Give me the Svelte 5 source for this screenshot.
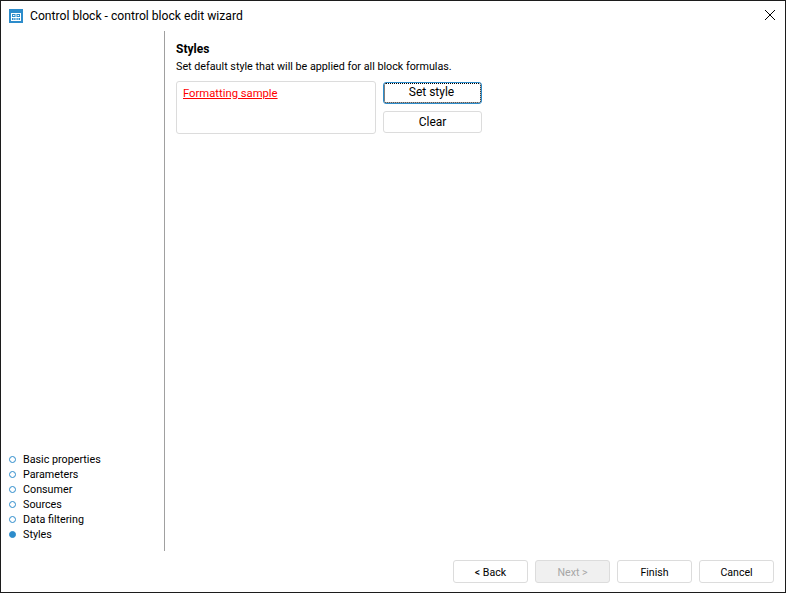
<script lang="ts">
  const steps = ['Basic properties', 'Parameters', 'Consumer', 'Sources', 'Data filtering', 'Styles'];
  let current = 'Styles';
</script>

<style>
  :global(body) {
    background: #fff;
  }

  .window {
    box-sizing: border-box;
    width: 786px;
    height: 593px;
    border: 1px solid #1c1c1c;
    background: #fff;
    display: flex;
    flex-direction: column;
    font-family: Roboto, "Open Sans", sans-serif;
    font-size: 10.75px;
    color: #000;
  }

  .titlebar {
    height: 30px;
    display: flex;
    align-items: center;
    padding: 0 9px 0 8px;
    gap: 7px;
    flex: none;
  }

  .title {
    flex: 1;
    font-size: 12.15px;
  }

  .close {
    display: block;
    margin: 0 0 2px;
  }

  .app-icon {
    display: block;
    margin-bottom: 1px;
  }

  .body {
    height: 520px;
    display: flex;
    flex: none;
  }

  .sidebar {
    box-sizing: border-box;
    width: 164px;
    border-right: 1px solid #a0a0a0;
    display: flex;
    flex-direction: column;
    justify-content: flex-end;
    padding: 0 0 9px 8px;
  }

  .step {
    height: 15px;
    display: flex;
    align-items: center;
    gap: 7px;
  }

  .dot {
    box-sizing: border-box;
    width: 7px;
    height: 7px;
    border: 1px solid #2d8ccb;
    border-radius: 50%;
  }

  .dot.active {
    background: #2d8ccb;
  }

  .main {
    flex: 1;
    padding: 10px 0 0 11px;
  }

  h2 {
    margin: 0;
    font-size: 12px;
    line-height: 16px;
    font-weight: 700;
  }

  p {
    margin: 2px 0 0;
    line-height: 16px;
  }

  .style-row {
    display: flex;
    gap: 7px;
    margin-top: 6px;
  }

  .sample {
    box-sizing: border-box;
    width: 200px;
    height: 53px;
    border: 1px solid #dcdcdc;
    border-radius: 3px;
    padding: 4px 6px;
    line-height: 16px;
    font-size: 11.25px;
    color: #ff0000;
    text-decoration: underline;
  }

  .style-buttons {
    display: flex;
    flex-direction: column;
    gap: 7px;
    width: 99px;
    padding-top: 1px;
  }

  button {
    box-sizing: border-box;
    height: 22px;
    padding: 0;
    background: #fff;
    border: 1px solid #dcdcdc;
    border-radius: 3px;
    font: inherit;
    color: #000;
  }

  .style-buttons button {
    font-size: 12px;
  }

  button.focused {
    border-color: #2d8ccb;
    outline: 1px dotted #000;
    outline-offset: -2px;
    padding: 0 2px 3px 0;
  }

  button:disabled {
    background: #f0f0f0;
    color: #a6a6a6;
  }

  .footer {
    flex: 1;
    display: flex;
    justify-content: flex-end;
    gap: 7px;
    padding: 9px 11px 0 0;
  }

  .footer button {
    width: 75px;
    height: 23px;
    padding-top: 1px;
    font-size: 10.6px;
  }
</style>

<div class="window">
  <div class="titlebar">
    <svg class="app-icon" width="14" height="14" viewBox="0 0 14 14">
      <rect width="14" height="14" fill="#2d8ccb" />
      <path d="M2 4h10v8H2z" fill="#fff" />
      <path d="M3 5h3.500v3H3zM7.500 5H11v3H7.500zM3 9h3.500v2H3zM7.500 9H11v2H7.500z" fill="#2d8ccb" />
      <path d="M4 6h1.500v1H4zM8.500 6H10v1H8.500zM4 9.500h1.500v1H4zM8.500 9.500H10v1H8.500z" fill="#fff" />
    </svg>
    <span class="title">Control block - control block edit wizard</span>
    <svg class="close" width="12" height="12" viewBox="0 0 12 12">
      <path d="M1 1l10 10M11 1L1 11" stroke="#000" stroke-width="1" fill="none" />
    </svg>
  </div>

  <div class="body">
    <div class="sidebar">
      {#each steps as step}
        <div class="step">
          <span class="dot" class:active={step === current}></span>
          <span>{step}</span>
        </div>
      {/each}
    </div>

    <div class="main">
      <h2>Styles</h2>
      <p>Set default style that will be applied for all block formulas.</p>
      <div class="style-row">
        <div class="sample">Formatting sample</div>
        <div class="style-buttons">
          <button class="focused">Set style</button>
          <button>Clear</button>
        </div>
      </div>
    </div>
  </div>

  <div class="footer">
    <button>&lt; Back</button>
    <button disabled>Next &gt;</button>
    <button>Finish</button>
    <button>Cancel</button>
  </div>
</div>
